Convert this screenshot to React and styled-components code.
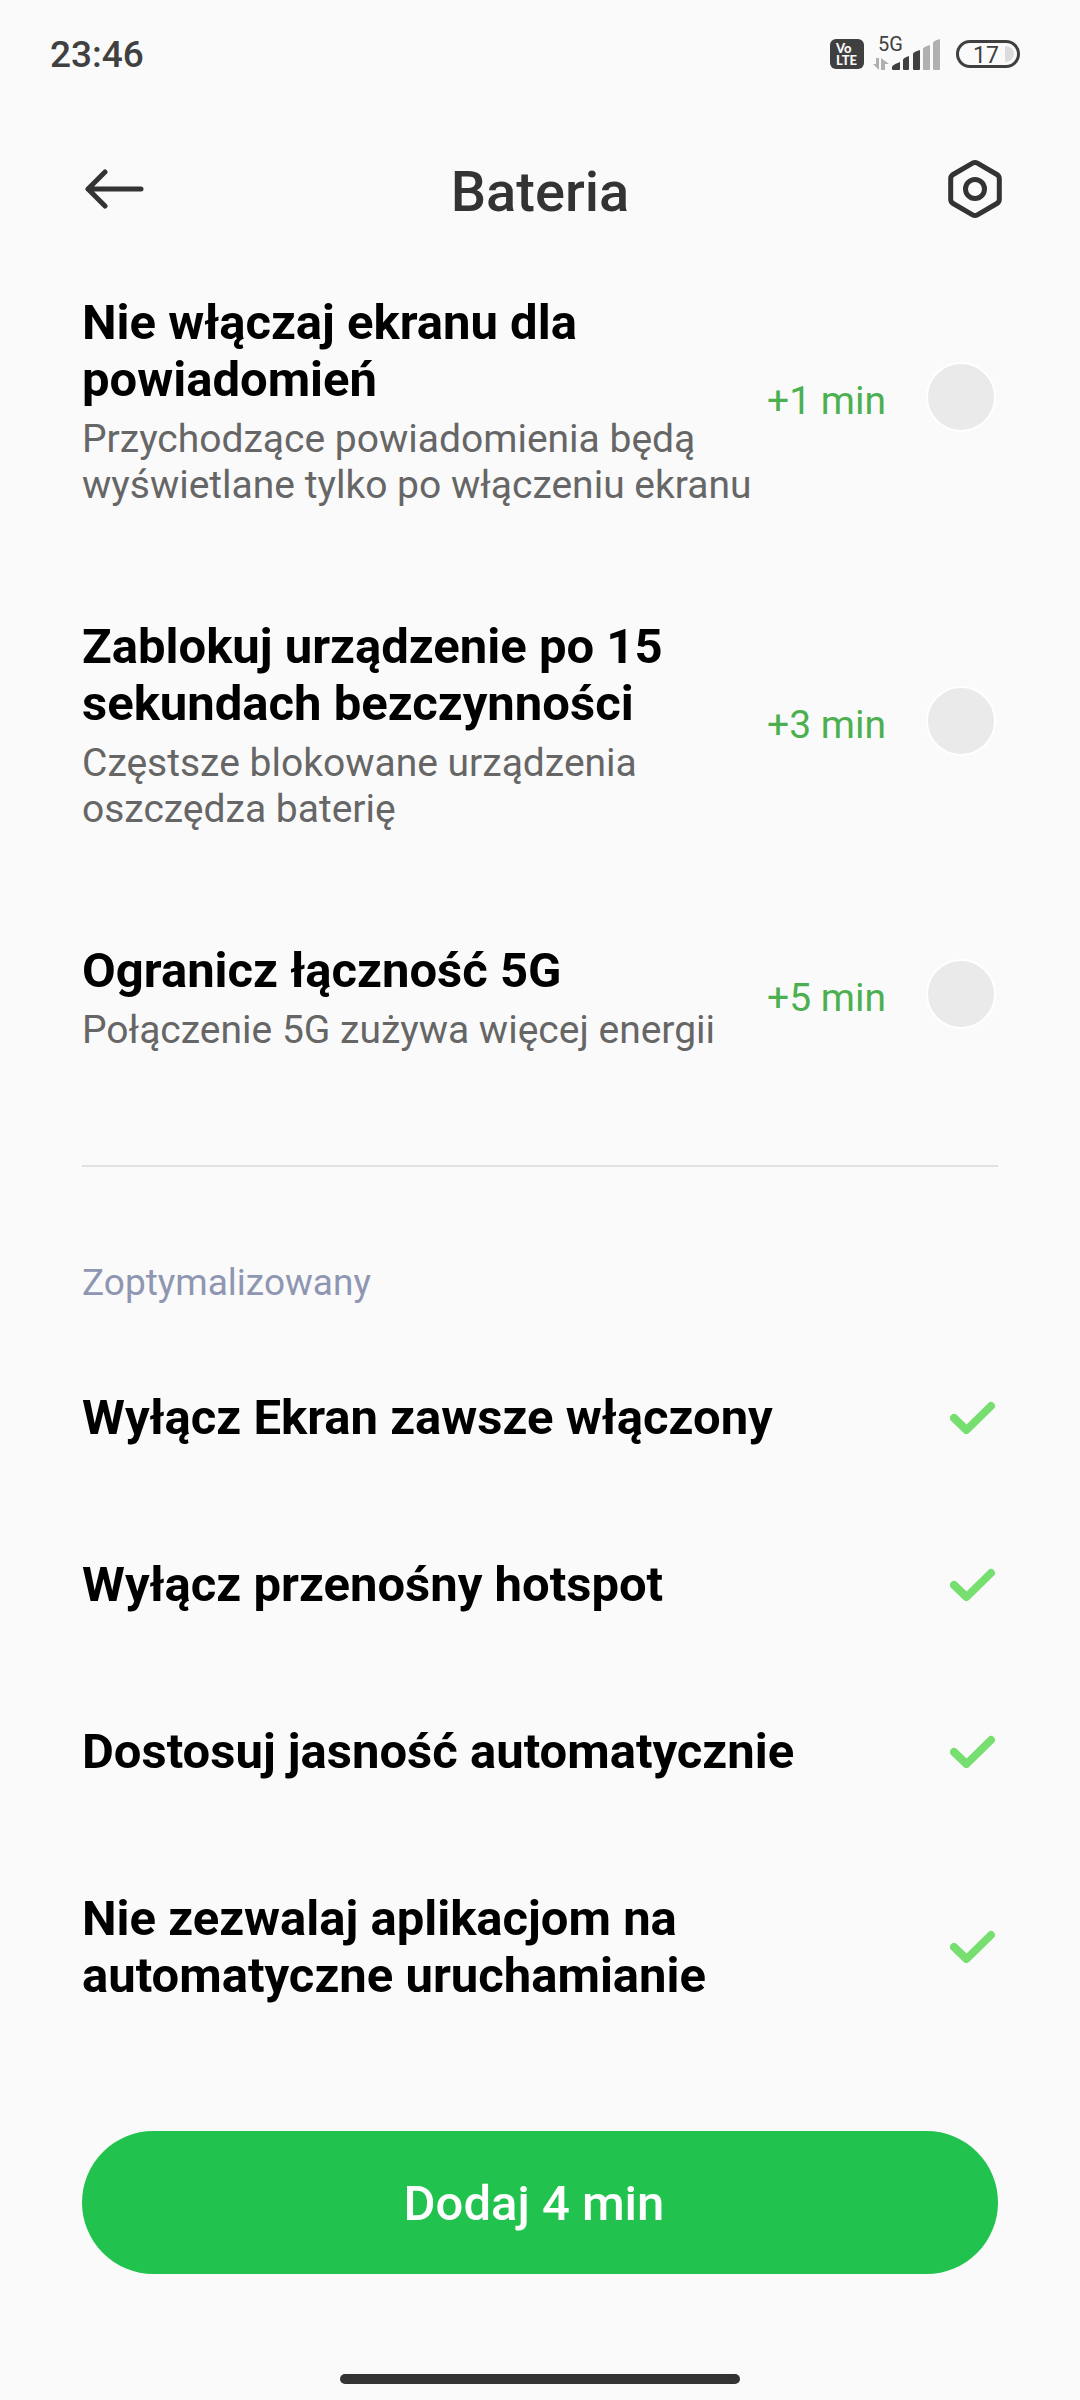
import React from "react";
import styled, { createGlobalStyle } from "styled-components";

const GlobalStyle = createGlobalStyle`
  * {
    box-sizing: border-box;
  }

  body {
    margin: 0;
    background-color: #fafafa;
    font-family: Roboto, "Noto Sans", sans-serif;
    color: #000;
  }

  h1, h2, h3, p, ul {
    margin: 0;
    padding: 0;
  }
`;

const Page = styled.div`
  display: flex;
  flex-direction: column;
  min-height: 100vh;
`;

const StatusBar = styled.div`
  display: flex;
  align-items: center;
  justify-content: space-between;
  height: 108px;
  padding: 0 60px 0 50px;
`;

const Time = styled.span`
  padding-top: 2px;
  font-size: 37px;
  line-height: 44px;
  font-weight: 500;
  color: #404040;
`;

const StatusIcons = styled.div`
  display: flex;
  align-items: center;
  gap: 9px;
`;

const Header = styled.header`
  display: grid;
  grid-template-columns: 72px 1fr 72px;
  align-items: center;
  height: 168px;
  margin-bottom: 18px;
  padding: 0 78px;
`;

const PageTitle = styled.h1`
  font-size: 56px;
  line-height: 66px;
  font-weight: 500;
  color: #333;
  text-align: center;
`;

const IconButton = styled.button`
  display: flex;
  align-items: center;
  justify-content: ${(props) => props.$align};
  height: 72px;
  padding: 0 0 6px;
  border: none;
  background: none;
  color: #333;
`;

const Content = styled.main`
  flex: 1;
  padding: 0 82px;
`;

const List = styled.ul`
  list-style: none;
`;

const Item = styled.li`
  display: flex;
  align-items: center;
  justify-content: space-between;
  padding-bottom: ${(props) => (props.$last ? 0 : 110)}px;
`;

const ItemText = styled.label`
  flex: 1;
`;

const ItemTitle = styled.h3`
  max-width: 720px;
  font-size: 49px;
  line-height: 57px;
  font-weight: 700;
`;

const ItemNote = styled.p`
  margin-top: 8px;
  font-size: 39px;
  line-height: 46px;
  color: #666;
`;

const Gain = styled.span`
  margin-right: 40px;
  font-size: 39px;
  line-height: 46px;
  color: #4caf50;
  white-space: nowrap;
`;

const Toggle = styled.input`
  appearance: none;
  width: 70px;
  height: 70px;
  margin: 0 2px 8px 0;
  border: 2px solid #fff;
  border-radius: 50%;
  background-color: #eaeaea;

  &:checked {
    background-color: #21c24d;
  }
`;

const Divider = styled.hr`
  height: 2px;
  margin: 112px 0 95px;
  border: none;
  background-color: #e0e0e0;
`;

const SectionLabel = styled.h2`
  margin-bottom: 85px;
  font-size: 37px;
  line-height: 42px;
  font-weight: 400;
  color: #8f96b2;
`;

const Footer = styled.footer`
  display: flex;
  flex-direction: column;
  align-items: center;
  padding: 0 82px 16px;
`;

const AddButton = styled.button`
  width: 100%;
  height: 143px;
  padding: 2px 12px 0 0;
  border: none;
  border-radius: 72px;
  background-color: #21c24d;
  color: #fff;
  font-family: inherit;
  font-size: 49px;
  line-height: 57px;
  font-weight: 500;
`;

const HomeBar = styled.div`
  width: 400px;
  height: 10px;
  margin-top: 100px;
  border-radius: 5px;
  background-color: #333;
`;

const suggestions = [
  {
    id: "screen",
    title: "Nie włączaj ekranu dla powiadomień",
    note: "Przychodzące powiadomienia będą wyświetlane tylko po włączeniu ekranu",
    gain: "+1 min",
  },
  {
    id: "lock",
    title: "Zablokuj urządzenie po 15 sekundach bezczynności",
    note: "Częstsze blokowane urządzenia oszczędza baterię",
    gain: "+3 min",
  },
  {
    id: "network",
    title: "Ogranicz łączność 5G",
    note: "Połączenie 5G zużywa więcej energii",
    gain: "+5 min",
  },
];

const optimized = [
  "Wyłącz Ekran zawsze włączony",
  "Wyłącz przenośny hotspot",
  "Dostosuj jasność automatycznie",
  "Nie zezwalaj aplikacjom na automatyczne uruchamianie",
];

const VolteIcon = () => (
  <svg width="34" height="30" viewBox="0 0 34 30">
    <rect width="34" height="30" rx="6" fill="#404040" />
    <g fill="#fafafa" fontFamily="Lato, sans-serif" fontWeight="900" fontSize="13">
      <text x="6" y="14">Vo</text>
      <text x="6" y="26">LTE</text>
    </g>
  </svg>
);

const SignalIcon = () => (
  <svg width="74" height="48" viewBox="0 -7 74 48">
    <text x="5" y="14" fontSize="20" fill="#404040">5G</text>
    <g fill="#b0b0b0">
      <path d="M3 21h3v12L0 27h3z" />
      <path d="M8 33V21l8 6h-4v6z" />
      <path d="M50 12q0-2 7-4v24q0 1-1 1h-5q-1 0-1-1z" />
      <path d="M60 6q0-2 7-4v30q0 1-1 1h-5q-1 0-1-1z" />
    </g>
    <g fill="#404040">
      <path d="M19 30q0-2 8-5v7q0 1-1 1h-6q-1 0-1-1z" />
      <path d="M30 23q0-2 6-4v13q0 1-1 1h-4q-1 0-1-1z" />
      <path d="M40 17q0-2 7-4v19q0 1-1 1h-5q-1 0-1-1z" />
    </g>
  </svg>
);

const BatteryIcon = () => (
  <svg width="64" height="28" viewBox="0 0 64 28">
    <rect x="1.5" y="1.5" width="61" height="25" rx="12.5" fill="none" stroke="#404040" strokeWidth="3" />
    <path d="M49 6a9 8 0 0 1 0 16z" fill="#dcdcdc" />
    <text x="30" y="23" fontSize="23" textAnchor="middle" fill="#404040">17</text>
  </svg>
);

const BackIcon = () => (
  <svg width="72" height="40" viewBox="0 0 72 40" fill="none" stroke="currentColor" strokeWidth="5" strokeLinecap="round" strokeLinejoin="round">
    <path d="M63 20H10M27 3 10 20l17 17" />
  </svg>
);

const SettingsIcon = () => (
  <svg width="54" height="60" viewBox="0 0 54 60" fill="none" stroke="currentColor" strokeWidth="5">
    <path d="M24.6 4.2q2.4-1.4 4.8 0l19.5 11.3q2.4 1.4 2.4 4.2v20.6q0 2.8-2.4 4.2L29.4 55.8q-2.4 1.4-4.8 0L5.1 44.5q-2.4-1.4-2.4-4.2V19.7q0-2.8 2.4-4.2z" />
    <circle cx="27" cy="30" r="9.5" />
  </svg>
);

const CheckIcon = () => (
  <svg width="48" height="34" viewBox="0 0 48 34" fill="none" stroke="#77df70" strokeWidth="8" strokeLinecap="round" strokeLinejoin="round">
    <path d="M4 17 16.5 29 41 5" />
  </svg>
);

const App = () => {
  return (
    <Page>
      <GlobalStyle />
      <StatusBar>
        <Time>23:46</Time>
        <StatusIcons>
          <VolteIcon />
          <SignalIcon />
          <BatteryIcon />
        </StatusIcons>
      </StatusBar>
      <Header>
        <IconButton $align="flex-start" aria-label="Wstecz">
          <BackIcon />
        </IconButton>
        <PageTitle>Bateria</PageTitle>
        <IconButton $align="flex-end" aria-label="Ustawienia">
          <SettingsIcon />
        </IconButton>
      </Header>
      <Content>
        <List>
          {suggestions.map((item, index) => (
            <Item key={item.id} $last={index === suggestions.length - 1}>
              <ItemText htmlFor={item.id}>
                <ItemTitle>{item.title}</ItemTitle>
                <ItemNote>{item.note}</ItemNote>
              </ItemText>
              <Gain>{item.gain}</Gain>
              <Toggle type="checkbox" id={item.id} />
            </Item>
          ))}
        </List>
        <Divider />
        <SectionLabel>Zoptymalizowany</SectionLabel>
        <List>
          {optimized.map((title, index) => (
            <Item key={title} $last={index === optimized.length - 1}>
              <ItemTitle>{title}</ItemTitle>
              <CheckIcon />
            </Item>
          ))}
        </List>
      </Content>
      <Footer>
        <AddButton>Dodaj 4 min</AddButton>
        <HomeBar />
      </Footer>
    </Page>
  );
};

export default App;
